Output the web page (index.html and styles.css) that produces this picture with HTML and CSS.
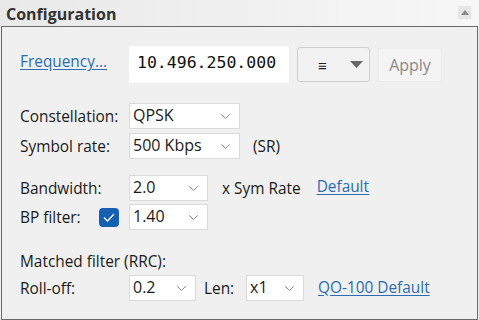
FILE: index.html
```html
<!DOCTYPE html>
<html>
<head>
<meta charset="utf-8">
<link rel="stylesheet" href="styles.css">
</head>
<body>
<div class="titlebar">
  <span class="title">Configuration</span>
  <span class="collapse"><svg width="8" height="5" viewBox="0 0 8 5"><path d="M0 5 L4 0 L8 5 Z" fill="#8a8a8a"/></svg></span>
</div>
<div class="panel">
  <div class="row freq-row">
    <a class="link freq-link">Frequency...</a>
    <div class="freq-input">10.496.250.000</div>
    <div class="menu-btn">
      <span class="menu-glyph">≡</span>
      <svg width="13" height="7" viewBox="0 0 13 7"><path d="M0 0 L13 0 L6.5 7 Z" fill="#666"/></svg>
    </div>
    <div class="apply">Apply</div>
  </div>

  <div class="group g1">
    <div class="row">
      <span class="label">Constellation:</span>
      <div class="combo w111"><span>QPSK</span><svg class="chev" width="9" height="5" viewBox="0 0 9 5"><path d="M0.5 0.5 L4.5 4.5 L8.5 0.5" fill="none" stroke="#888" stroke-width="1"/></svg></div>
    </div>
    <div class="row">
      <span class="label">Symbol rate:</span>
      <div class="combo w111"><span>500 Kbps</span><svg class="chev" width="9" height="5" viewBox="0 0 9 5"><path d="M0.5 0.5 L4.5 4.5 L8.5 0.5" fill="none" stroke="#888" stroke-width="1"/></svg></div>
      <span class="after sr">(SR)</span>
    </div>
  </div>

  <div class="group g2">
    <div class="row">
      <span class="label">Bandwidth:</span>
      <div class="combo w79"><span>2.0</span><svg class="chev" width="9" height="5" viewBox="0 0 9 5"><path d="M0.5 0.5 L4.5 4.5 L8.5 0.5" fill="none" stroke="#888" stroke-width="1"/></svg></div>
      <span class="after xsym">x Sym Rate</span>
      <a class="link def">Default</a>
    </div>
    <div class="row">
      <span class="label labelcb">BP filter:<span class="check"><svg width="12" height="9" viewBox="0 0 12 9"><path d="M1 4.5 L4.5 8 L11 1" fill="none" stroke="#fff" stroke-width="1.3"/></svg></span></span>
      <div class="combo w79"><span>1.40</span><svg class="chev" width="9" height="5" viewBox="0 0 9 5"><path d="M0.5 0.5 L4.5 4.5 L8.5 0.5" fill="none" stroke="#888" stroke-width="1"/></svg></div>
    </div>
  </div>

  <div class="group g3">
    <div class="row mf"><span>Matched filter (RRC):</span></div>
    <div class="row">
      <span class="label">Roll-off:</span>
      <div class="combo w67"><span>0.2</span><svg class="chev" width="9" height="5" viewBox="0 0 9 5"><path d="M0.5 0.5 L4.5 4.5 L8.5 0.5" fill="none" stroke="#888" stroke-width="1"/></svg></div>
      <span class="len">Len:</span>
      <div class="combo w58"><span>x1</span><svg class="chev" width="9" height="5" viewBox="0 0 9 5"><path d="M0.5 0.5 L4.5 4.5 L8.5 0.5" fill="none" stroke="#888" stroke-width="1"/></svg></div>
      <a class="link qo">QO-100 Default</a>
    </div>
  </div>
</div>
</body>
</html>
```
FILE: styles.css
```css
* { box-sizing: border-box; }
html, body { margin: 0; padding: 0; }
body {
  width: 479px;
  height: 320px;
  overflow: hidden;
  background: #f0f0f0;
  font-family: "Open Sans", "Noto Sans", sans-serif;
  font-size: 15.4px;
  color: #1a1a1a;
}
.titlebar {
  height: 26px;
  display: flex;
  align-items: center;
  justify-content: space-between;
  padding: 0 7px 0 6px;
  background: linear-gradient(to right, #e9e9e9, #f7f7f7);
}
.title {
  font-weight: bold;
  font-size: 16px;
  color: #333;
  margin-top: 1px;
}
.collapse {
  width: 15px;
  height: 15px;
  background: #e6e6e6;
  border: 1px solid #f4f4f4;
  display: flex;
  align-items: center;
  justify-content: center;
  margin-top: -1px;
}
.panel {
  margin: 0 1px;
  height: 294px;
  border: 1px solid #6a6a6a;
  background: #f0f0f0;
  padding: 19px 0 0 18px;
}
.row {
  display: flex;
  align-items: center;
}
.link {
  color: #2a6cb3;
  text-decoration: underline;
  text-underline-offset: 2px;
}
.freq-row { height: 37px; }
.freq-link { width: 109px; margin-top: -6px; }
.freq-input {
  width: 160px;
  height: 37px;
  background: #fff;
  font-family: "DejaVu Sans Mono", monospace;
  font-size: 16.5px;
  padding: 7px 0 0 8px;
  color: #111;
}
.menu-btn {
  margin-left: 8px;
  width: 73px;
  height: 35px;
  border: 1px solid #cfcfcf;
  border-radius: 3px;
  background: #f2f2f2;
  display: flex;
  align-items: center;
  justify-content: space-between;
  padding: 0 6px 0 20px;
}
.menu-glyph { font-size: 15px; color: #222; }
.apply {
  margin-left: 8px;
  width: 64px;
  height: 34px;
  border: 1px solid #ececec;
  border-radius: 2px;
  background: #f4f4f4;
  color: #8a8a8a;
  font-size: 16px;
  display: flex;
  align-items: center;
  justify-content: center;
}
.group { display: flex; flex-direction: column; }
.g1 { margin-top: 20px; gap: 4px; }
.g2 { margin-top: 16px; gap: 3px; }
.g3 { margin-top: 19px; }
.label { width: 109px; }
.labelcb { display: flex; align-items: center; justify-content: space-between; padding-right: 10px; }
.check {
  width: 20px;
  height: 19px;
  background: #1560b3;
  border-radius: 4px;
  display: flex;
  align-items: center;
  justify-content: center;
}
.combo {
  height: 26px;
  background: #fff;
  border: 1px solid #dadada;
  display: flex;
  align-items: center;
  justify-content: space-between;
  padding: 0 9px 0 3px;
  font-size: 16px;
}
.combo span { margin-top: -2px; }
.w111 { width: 111px; }
.w79 { width: 79px; }
.w67 { width: 67px; }
.w58 { width: 58px; }
.sr { margin-left: 13px; }
.xsym { margin-left: 14px; }
.def { margin-left: 16px; margin-top: -4px; }
.mf { height: 24px; }
.g3 .row:last-child { margin-top: 2px; }
.len { margin-left: 8px; width: 42px; }
.qo { margin-left: 14px; margin-top: -2px; }
```
